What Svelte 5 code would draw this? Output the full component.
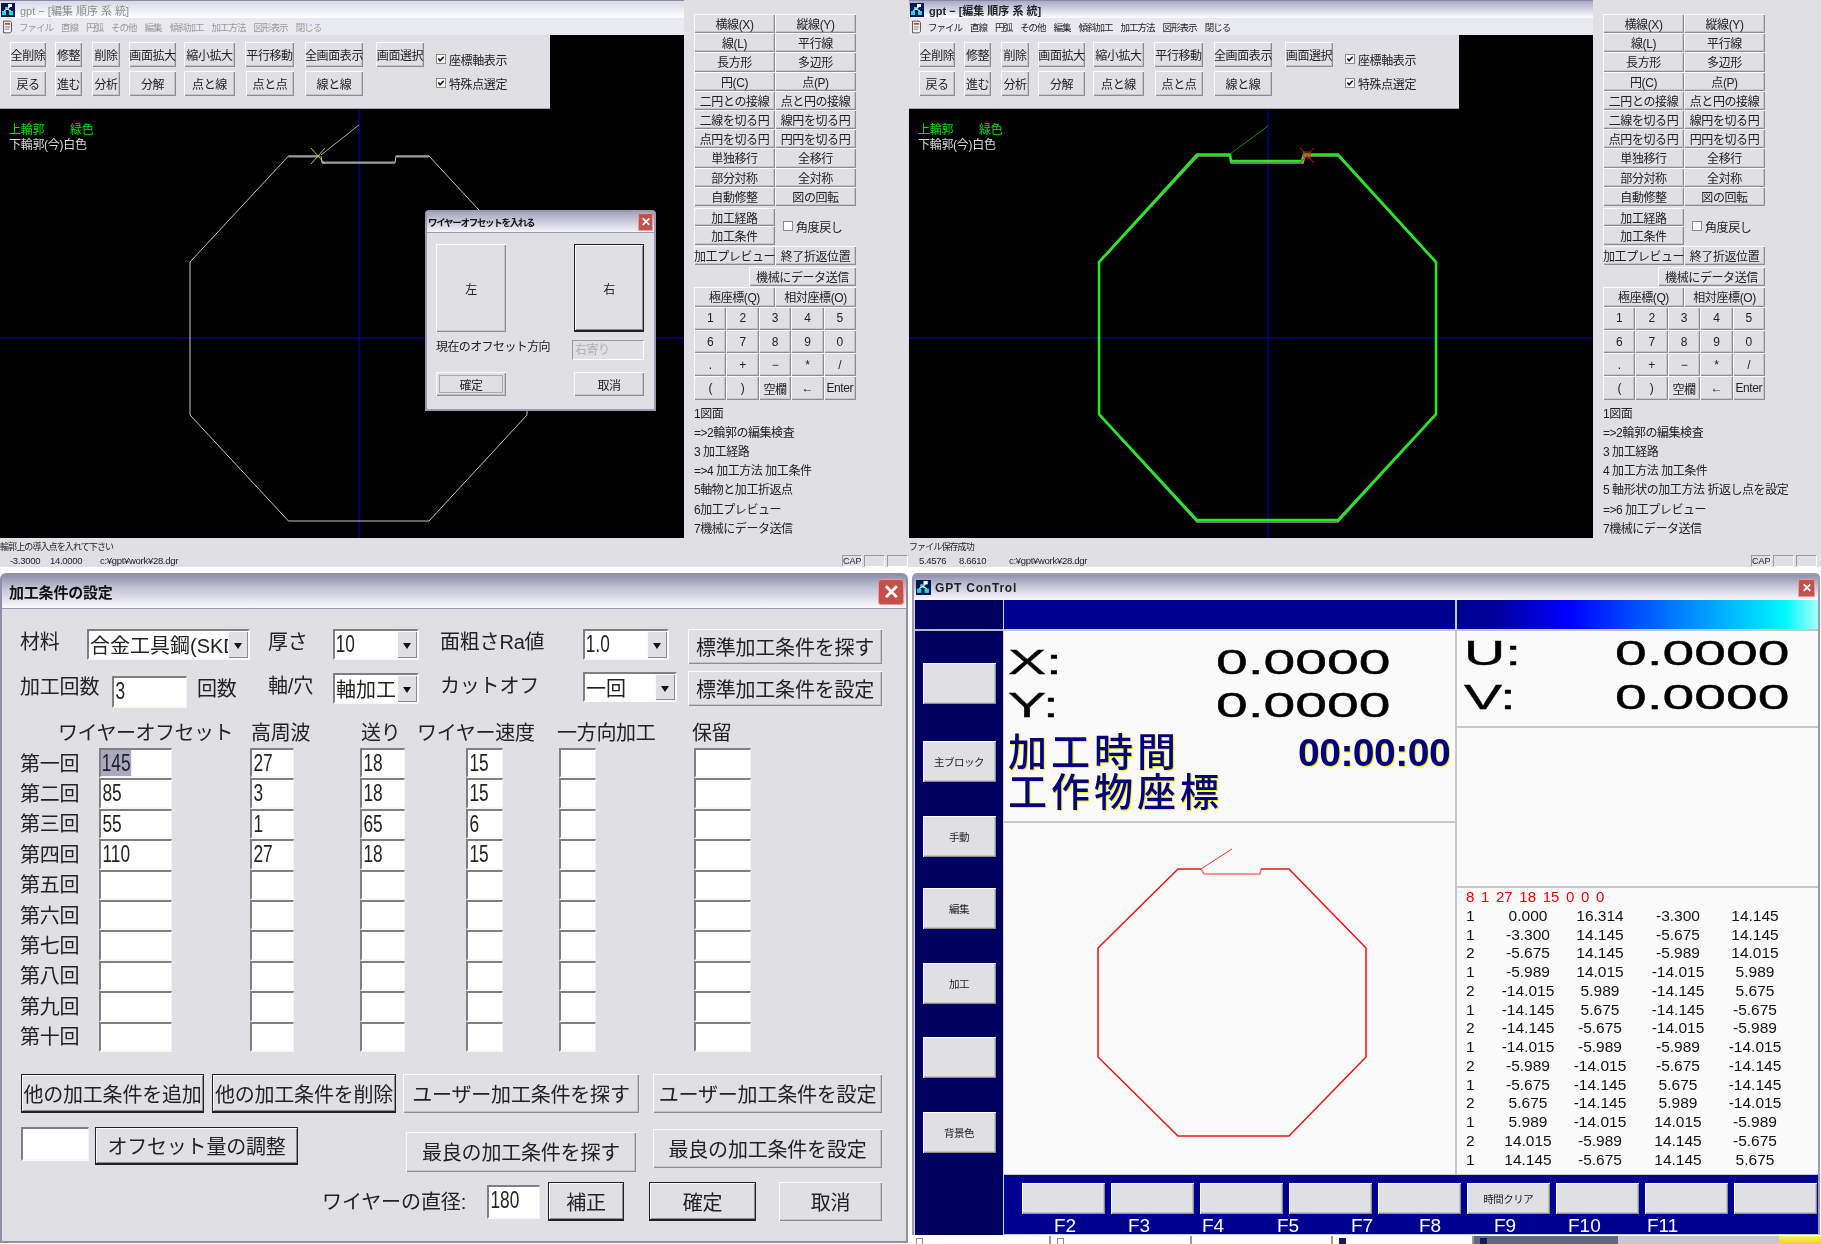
<script>
  const toolRows = [
    [['全削除',10,36],['修整',55,27],['削除',92,28],['画面拡大',129,47],['縮小拡大',184,51],['平行移動',245,49],['全画面表示',305,58],['画面選択',376,48]],
    [['戻る',10,36],['進む',55,27],['分析',92,28],['分解',129,47],['点と線',184,51],['点と点',246,48],['線と線',305,58]]
  ];
  const gapOf = (row, i) => row[i][1] - (i ? row[i-1][1] + row[i-1][2] : 0);
  const menu = ['ファイル','直線','円弧','その他','編集','傾斜加工','加工方法','図形表示','閉じる'];
  const drawBtns = ['横線(X)','縦線(Y)','線(L)','平行線','長方形','多辺形','円(C)','点(P)','二円との接線','点と円の接線','二線を切る円','線円を切る円','点円を切る円','円円を切る円','単独移行','全移行','部分対称','全対称','自動修整','図の回転'];
  const numpad = ['1','2','3','4','5','6','7','8','9','0','.','+','−','*','/','(',')','空欄','←','Enter'];
  const listA = ['1図面','=>2輪郭の編集検査','3 加工経路','=>4 加工方法 加工条件','5軸物と加工折返点','6加工プレビュー','7機械にデータ送信'];
  const listB = ['1図面','=>2輪郭の編集検査','3 加工経路','4 加工方法 加工条件','5 軸形状の加工方法 折返し点を設定','=>6 加工プレビュー','7機械にデータ送信'];

  const rounds = ['第一回','第二回','第三回','第四回','第五回','第六回','第七回','第八回','第九回','第十回'];
  const values = [['145','27','18','15','',''],['85','3','18','15','',''],['55','1','65','6','',''],['110','27','18','15','','']];
  const cellOf = (r, c) => (values[r] ? values[r][c] : '');

  const sideBtns = [['',32],['主ブロック',37],['手動',34],['編集',31],['加工',34],['',33],['背景色',34]];
  const fBtns = ['','','','','','時間クリア','','',''];
  const fLabels = ['F2','F3','F4','F5','F7','F8','F9','F10','F11'];
  const table = [
    ['1','0.000','16.314','-3.300','14.145'],['1','-3.300','14.145','-5.675','14.145'],['2','-5.675','14.145','-5.989','14.015'],
    ['1','-5.989','14.015','-14.015','5.989'],['2','-14.015','5.989','-14.145','5.675'],['1','-14.145','5.675','-14.145','-5.675'],
    ['2','-14.145','-5.675','-14.015','-5.989'],['1','-14.015','-5.989','-5.989','-14.015'],['2','-5.989','-14.015','-5.675','-14.145'],
    ['1','-5.675','-14.145','5.675','-14.145'],['2','5.675','-14.145','5.989','-14.015'],['1','5.989','-14.015','14.015','-5.989'],
    ['2','14.015','-5.989','14.145','-5.675'],['1','14.145','-5.675','14.145','5.675']
  ];
</script>

{#snippet appIcon()}
  <svg class="appicon" viewBox="0 0 14 14" aria-hidden="true">
    <rect width="14" height="14" fill="#0a1450"/>
    <rect x="7" y="1" width="4" height="3" fill="#fff"/>
    <rect x="4" y="4" width="4" height="3" fill="#22d8e0"/>
    <rect x="1" y="8" width="4" height="4" fill="#22d8e0"/>
    <rect x="8" y="8" width="4" height="4" fill="#22d8e0"/>
    <path d="M3 8 L6 6 L10 8 M9 4 L7 5" stroke="#fff" stroke-width="1" fill="none"/>
  </svg>
{/snippet}

{#snippet docIcon()}
  <svg class="docicon" viewBox="0 0 10 14" aria-hidden="true">
    <path d="M.5 .5 H8 L9.5 2 V12 L7.5 13.5 H.5 Z" fill="#f4f4f4" stroke="#444"/>
    <rect x="2" y="2.5" width="6" height="2" fill="#d84040"/>
    <path d="M2 7 H8 M2 9.5 H7" stroke="#777"/>
  </svg>
{/snippet}

{#snippet check(on, text)}
  <div class="chk">
    <span class="box">
      {#if on}
        <svg viewBox="0 0 9 9" aria-hidden="true"><path d="M1.5 4 L3.5 6.5 L7.5 2" fill="none" stroke="#111" stroke-width="1.7"/></svg>
      {/if}
    </span>
    <span>{text}</span>
  </div>
{/snippet}

{#snippet cad(active, list, status, c1, c2)}
  <div class="cad-grid">
    <div class="cad-main">
      <div class="title" class:inactive={!active}>
        {@render appIcon()}
        <span>gpt − [編集 順序 系 統]</span>
      </div>
      <div class="menu" class:inactive={!active}>
        {@render docIcon()}
        {#each menu as m}<span>{m}</span>{/each}
      </div>
      <div class="stage">
        <svg class="draw" viewBox="0 35 684 504" aria-hidden="true">
          <path d="M0 338 H684 M359 109 V539" stroke="#0000c8" stroke-width="1" fill="none"/>
          {#if active}
            <path d="M289 156 L190 263 V415 L288 522 H429 L527 415 V263 L429 156 H396 L394 163 H322 L321 156 Z" fill="none" stroke="#9a9a9a" stroke-width="1.5"/>
            <path d="M321 154.500 L322 161 H393 L395 154.500 H429 L527 262 V414 L429 520 H288 L190 414 V262 L288 154.500 Z" fill="none" stroke="#1cf01c" stroke-width="2.500"/>
            <path d="M359 126 L321 154" stroke="#0a8a0a" stroke-width="1" fill="none"/>
            <path d="M391 148 L405 163 M405 148 L391 163" stroke="#e01010" stroke-width="1" fill="none"/>
            <rect x="395" y="152" width="6" height="6" fill="none" stroke="#e01010"/>
          {:else}
            <path d="M320 156 H288.500 L190 262 V415 L288.500 521 H429 L527 415 V262 L429 156 H396 L395 163 H322 L321 156" fill="none" stroke="#c6c6c6" stroke-width="1"/>
            <path d="M288.500 156.500 H318 M322 162.500 H395 M396 156.500 H429" stroke="#9a9a9a" stroke-width="2" fill="none"/>
            <path d="M359 125 L321 155" stroke="#a8a8a8" stroke-width="1" fill="none"/>
            <path d="M311 148 L325 164 M325 148 L311 164" stroke="#c8c820" stroke-width="1" fill="none"/>
          {/if}
        </svg>

        <div class="toolbar">
          <div class="tool-rows">
            {#each toolRows as row}
              <div class="tool-row">
                {#each row as b, i}
                  <button class="btn" style="width:{b[2]}px;margin-left:{gapOf(row, i)}px">{b[0]}</button>
                {/each}
              </div>
            {/each}
          </div>
          <div class="tool-checks">
            {@render check(true, '座標軸表示')}
            {@render check(true, '特殊点選定')}
          </div>
        </div>

        <div class="legend">
          <div class="green">上輪郭<span class="legend-gap">緑色</span></div>
          <div>下輪郭(今)白色</div>
        </div>

        {#if !active}
          <div class="dialog">
            <div class="dlg-title">
              <span>ワイヤーオフセットを入れる</span>
              <span class="close small">✕</span>
            </div>
            <div class="dlg-body">
              <div class="dlg-big">
                <button class="btn">左</button>
                <button class="btn def">右</button>
              </div>
              <div class="dlg-line">
                <span class="dlg-label">現在のオフセット方向</span>
                <span class="dlg-field">右寄り</span>
              </div>
              <div class="dlg-foot">
                <button class="btn focus">確定</button>
                <button class="btn">取消</button>
              </div>
            </div>
          </div>
        {/if}
      </div>
    </div>

    <aside class="panel">
      <div class="two">
        {#each drawBtns as b}<button class="btn">{b}</button>{/each}
      </div>
      <div class="two mid">
        <div class="stack">
          <button class="btn">加工経路</button>
          <button class="btn">加工条件</button>
        </div>
        {@render check(false, '角度戻し')}
      </div>
      <div class="two wide">
        <button class="btn">加工プレビュー</button>
        <button class="btn">終了折返位置</button>
      </div>
      <button class="btn send">機械にデータ送信</button>
      <div class="two coord">
        <button class="btn">極座標(Q)</button>
        <button class="btn">相対座標(O)</button>
      </div>
      <div class="pad">
        {#each numpad as n}<button class="btn">{n}</button>{/each}
      </div>
      <div class="steps">
        {#each list as l}<div>{l}</div>{/each}
      </div>
    </aside>

    <footer class="status">
      <div class="status-msg">{status}</div>
      <div class="status-line">
        <span class="s-a">{c1}</span>
        <span class="s-b">{c2}</span>
        <span class="s-path">c:¥gpt¥work¥28.dgr</span>
        <span class="s-box cap">CAP</span>
        <span class="s-box"></span>
        <span class="s-box"></span>
      </div>
    </footer>
  </div>
{/snippet}

<div class="desk">
  <section class="cad cad-a">{@render cad(false, listA, '輪郭上の導入点を入れて下さい', '-3.3000', '14.0000')}</section>
  <section class="cad cad-b">{@render cad(true, listB, 'ファイル保存成功', '5.4576', '8.6610')}</section>

  <section class="form-win">
    <div class="form-title">
      <span>加工条件の設定</span>
      <span class="close">✕</span>
    </div>
    <div class="form">
      <div class="r1">
        <span class="lab">材料</span>
        <div class="combo cb-mat"><span class="combo-txt">合金工具鋼(SKD</span><span class="arrow"></span></div>
        <span class="lab">厚さ</span>
        <div class="combo cb-s"><span class="combo-txt num">10</span><span class="arrow"></span></div>
        <span class="lab">面粗さRa値</span>
        <div class="combo cb-s"><span class="combo-txt num">1.0</span><span class="arrow"></span></div>
        <button class="btn big b-std">標準加工条件を探す</button>
      </div>
      <div class="r2">
        <span class="lab m3">加工回数</span>
        <div class="field f-count"><span class="val">3</span></div>
        <span class="lab m5">回数</span>
        <span class="lab m2">軸/穴</span>
        <div class="combo cb-s m2"><span class="combo-txt">軸加工</span><span class="arrow"></span></div>
        <span class="lab m2">カットオフ</span>
        <div class="combo cb-cut"><span class="combo-txt">一回</span><span class="arrow"></span></div>
        <button class="btn big b-std">標準加工条件を設定</button>
      </div>
      <div class="heads">
        <span>ワイヤーオフセット</span><span>高周波</span><span>送り</span><span>ワイヤー速度</span><span>一方向加工</span><span>保留</span>
      </div>
      <div class="cells">
        {#each rounds as r, ri}
          <span class="round">{r}</span>
          {#each [0,1,2,3,4,5] as c}
            <div class="field c{c}">
              <span class="val" class:sel={ri === 0 && c === 0}>{cellOf(ri, c)}</span>
            </div>
          {/each}
        {/each}
      </div>
      <div class="act-a">
        <button class="btn big def a1">他の加工条件を追加</button>
        <button class="btn big def a2">他の加工条件を削除</button>
        <button class="btn big a3">ユーザー加工条件を探す</button>
        <button class="btn big a4">ユーザー加工条件を設定</button>
      </div>
      <div class="act-b">
        <div class="field b1"></div>
        <button class="btn big def b2">オフセット量の調整</button>
        <button class="btn big b3">最良の加工条件を探す</button>
        <button class="btn big b4">最良の加工条件を設定</button>
      </div>
      <div class="act-c">
        <span class="lab wire">ワイヤーの直径:</span>
        <div class="field d1"><span class="val">180</span></div>
        <button class="btn big def d2">補正</button>
        <button class="btn big def d3">確定</button>
        <button class="btn big d4">取消</button>
      </div>
    </div>
  </section>

  <section class="gpt">
    <div class="gpt-title">
      {@render appIcon()}
      <span>GPT ConTrol</span>
      <span class="close tiny">✕</span>
    </div>
    <div class="gpt-body">
      <div class="side">
        <div class="side-top"></div>
        {#each sideBtns as s}
          <button class="btn side-btn" style="margin-top:{s[1]}px">{s[0]}</button>
        {/each}
      </div>
      <div class="gpt-main">
        <div class="bar"></div>
        <div class="bar grad"></div>
        <div class="col">
          <div class="pos">
            <div class="pos-row"><span class="big-t">X:</span><span class="big-t">0.0000</span></div>
            <div class="pos-row"><span class="big-t">Y:</span><span class="big-t">0.0000</span></div>
            <div class="time-row"><span class="jp">加工時間</span><span class="clock">00:00:00</span></div>
            <div class="time-row"><span class="jp">工作物座標</span></div>
          </div>
          <div class="shape">
            <svg viewBox="1004 823 451 351" aria-hidden="true">
              <path d="M1232 849 L1201 869" stroke="#ff3030" stroke-width="1" fill="none"/>
              <path d="M1201 869 L1204 874 H1260 L1261 869" stroke="#ff7070" stroke-width="1.500" fill="none"/>
              <path d="M1201 869 H1178 L1098 948 V1057 L1178 1136 H1289 L1366 1057 V948 L1289 869 H1261" stroke="#f41010" stroke-width="1.500" fill="none"/>
            </svg>
          </div>
        </div>
        <div class="col">
          <div class="uv">
            <div class="uv-row"><span class="big-t">U:</span><span class="big-t">0.0000</span></div>
            <div class="uv-row"><span class="big-t">V:</span><span class="big-t">0.0000</span></div>
          </div>
          <div class="blank"></div>
          <div class="tbl">
            <div class="tbl-head">8 1 27 18 15 0 0 0</div>
            {#each table as row}
              <div class="tbl-row">{#each row as v}<span>{v}</span>{/each}</div>
            {/each}
          </div>
        </div>
        <div class="fbar">
          <div class="fbtns">
            {#each fBtns as f}<button class="btn">{f}</button>{/each}
          </div>
          <div class="flabels">
            {#each fLabels as f}<span>{f}</span>{/each}
          </div>
        </div>
      </div>
    </div>
  </section>

  <div class="taskbar">
    <span class="tab"><i class="mini hollow"></i></span>
    <span class="tab"><i class="mini hollow"></i></span>
    <span class="tab"></span>
    <span class="tab"><i class="mini navy"></i></span>
    <span class="tab on"><i class="mini navy"></i></span>
    <span class="tray"></span>
    <span class="start"></span>
  </div>
</div>

<style>
  :global(body) { margin: 0; background: #fff; }
  .desk {
    position: relative; width: 1821px; height: 1244px; overflow: hidden; background: #fff;
    font-family: "Liberation Sans", "Noto Sans CJK JP", sans-serif; color: #222;
    filter: blur(.35px);
  }
  button { font-family: inherit; color: inherit; }

  .btn {
    box-sizing: border-box; padding: 0; margin: 0; background: #e0dfe3; border: 0; border-radius: 0;
    box-shadow: inset 1px 1px 0 #fbfbfb, inset -1px -1px 0 #8d8c90, inset -2px -2px 0 #c4c3c7;
    font-size: 12px; letter-spacing: -.4px; white-space: nowrap; overflow: hidden;
  }
  .btn.def { box-shadow: inset 0 0 0 1px #222, inset -1px -2px 0 #222, inset 2px 2px 0 #fbfbfb, inset -2px -3px 0 #8d8c90; }
  .btn.focus { box-shadow: inset 1px 1px 0 #fbfbfb, inset -1px -1px 0 #8d8c90, inset -2px -2px 0 #c4c3c7, inset 0 0 0 3px #e0dfe3, inset 0 0 0 4px #aaa; }

  /* ---------- CAD windows ---------- */
  .cad { position: absolute; top: 0; width: 909px; height: 567px; background: #e0dfe3; }
  .cad-a { left: 0; }
  .cad-b { left: 909px; width: 912px; }
  .cad-grid { display: grid; grid-template-columns: 684px 225px; grid-template-rows: 538px 29px; height: 100%; }
  .cad-main { display: flex; flex-direction: column; min-width: 0; }
  .title {
    height: 18px; display: flex; align-items: center; gap: 5px; padding-left: 1px; box-sizing: border-box;
    background: linear-gradient(#a9a9c6, #dcdcea 60%, #fff); font-size: 11px; font-weight: 700; color: #222;
    border-top: 1px solid #8a8aa8;
  }
  .title.inactive { color: #8c8c8c; font-weight: 400; background: linear-gradient(#d8d8e6, #f0f0f6 60%, #fff); }
  .appicon { width: 14px; height: 14px; flex: none; }
  .docicon { width: 9px; height: 14px; flex: none; }
  .menu {
    height: 17px; display: flex; align-items: center; gap: 8px; padding-left: 3px; background: #e9e9f0;
    font-size: 9.500px; letter-spacing: -1px; color: #222;
  }
  .menu .docicon { margin-right: -1px; }
  .menu.inactive { color: #9a9a9a; }
  .stage { position: relative; height: 503px; background: #000; overflow: hidden; }
  .draw { position: absolute; inset: 0; width: 684px; height: 504px; }
  .toolbar {
    position: relative; width: 550px; height: 74px; box-sizing: border-box; background: #e0dfe3;
    border-bottom: 1px solid #a5a5a8; display: flex;
  }
  .tool-rows { width: 436px; padding-top: 7px; display: flex; flex-direction: column; gap: 4px; }
  .tool-row { display: flex; height: 25px; }
  .tool-checks { display: flex; flex-direction: column; gap: 10px; padding-top: 17px; }
  .chk { display: flex; align-items: center; gap: 3px; font-size: 12px; letter-spacing: -.4px; height: 14px; }
  .box { width: 10px; height: 10px; flex: none; background: #fff; box-sizing: border-box; border: 1px solid #8a8a8a; display: block; }
  .box svg { display: block; width: 8px; height: 8px; }
  .legend { position: relative; padding: 14px 0 0 9px; font-size: 12px; letter-spacing: -.3px; line-height: 15px; color: #d8d8d8; }
  .green { color: #00e000; }
  .legend-gap { margin-left: 26px; }

  .dialog {
    position: absolute; left: 425px; top: 175px; width: 231px; height: 201px; box-sizing: border-box;
    background: #e0dfe3; border: 2px solid #9a9bb2; border-radius: 4px 4px 0 0;
  }
  .dlg-title {
    height: 20px; display: flex; align-items: center; justify-content: space-between; padding: 0 1px 0 1px;
    background: linear-gradient(#a4a5c0, #f4f4f8); font-size: 9.500px; font-weight: 700; letter-spacing: -1.300px;
    border-bottom: 1px solid #9a9bb2; color: #111;
  }
  .dlg-body { padding: 11px 10px 0 9px; font-size: 13px; letter-spacing: -.5px; }
  .dlg-big { display: flex; justify-content: space-between; }
  .dlg-big .btn { width: 70px; height: 88px; font-size: 12px; }
  .dlg-line { display: flex; justify-content: space-between; align-items: flex-start; height: 20px; margin-top: 8px; font-size: 12px; }
  .dlg-label { line-height: 14px; letter-spacing: -.6px; }
  .dlg-field {
    width: 72px; height: 20px; box-sizing: border-box; border: 1px solid; border-color: #9a9a9e #fff #fff #9a9a9e;
    color: #b0b0b0; padding-left: 2px; line-height: 18px; font-size: 12px;
  }
  .dlg-foot { display: flex; justify-content: space-between; margin-top: 12px; }
  .dlg-foot .btn { width: 70px; height: 24px; }

  .close {
    width: 26px; height: 26px; box-sizing: border-box; flex: none; border-radius: 4px; background: #c4504c;
    box-shadow: inset 0 0 0 1px #e89a96; color: #fff; font-size: 20px; font-weight: 700; letter-spacing: 0;
    display: flex; align-items: center; justify-content: center; line-height: 1;
  }
  .close.small { width: 15px; height: 18px; font-size: 12px; border-radius: 2px; }
  .close.tiny { width: 17px; height: 18px; font-size: 12px; margin-left: auto; margin-right: 3px; border-radius: 2px; }

  .panel { padding: 14px 0 0 10px; font-size: 12px; min-width: 0; }
  .two { display: grid; grid-template-columns: 81px 81px; grid-auto-rows: 19.200px; }
  .two.mid { margin-top: 2px; grid-auto-rows: 37px; }
  .two.mid .chk { padding-left: 8px; align-self: center; }
  .stack { display: grid; grid-auto-rows: 18.500px; }
  .two.wide { margin-top: 1.500px; grid-auto-rows: 19px; }
  .send { display: block; width: 107px; height: 19px; margin: 1.500px 0 1px 55px; }
  .two.coord { grid-auto-rows: 20px; }
  .pad { display: grid; grid-template-columns: repeat(5, 32.400px); grid-auto-rows: 23.200px; }
  .steps { margin-top: 5px; line-height: 19.200px; font-size: 12px; letter-spacing: -.45px; white-space: nowrap; }

  .status { grid-column: 1 / -1; font-size: 9px; color: #222; overflow: hidden; }
  .status-msg { height: 17px; line-height: 19px; letter-spacing: -.9px; }
  .status-line { display: flex; height: 12px; line-height: 12px; letter-spacing: -.3px; font-size: 9.500px; padding-right: 1px; }
  .s-a { margin-left: 10px; width: 40px; flex: none; }
  .s-b { width: 50px; flex: none; }
  .s-path { flex: none; white-space: nowrap; }
  .s-box { width: 21px; height: 12px; flex: none; box-sizing: border-box; border: 1px solid; border-color: #9a9a9e #fff #fff #9a9a9e; margin-left: 2px; line-height: 10px; }
  .s-box.cap { margin-left: auto; width: 20px; font-size: 9px; letter-spacing: 0; text-align: center; }

  /* ---------- Machining conditions ---------- */
  .form-win {
    position: absolute; left: 0; top: 573px; width: 908px; height: 670px; box-sizing: border-box;
    background: #e0dfe3; border: 2px solid #8f90a8; border-radius: 6px 6px 0 0;
    display: flex; flex-direction: column;
  }
  .form-title {
    height: 33px; flex: none; display: flex; align-items: center; justify-content: space-between; padding: 0 2px 0 7px;
    background: linear-gradient(#8f90ad, #c3c4d6 40%, #fbfbfd); border-bottom: 1px solid #9a9bb2;
    font-size: 15px; font-weight: 700; letter-spacing: -.2px; color: #111;
  }
  .form { padding: 20px 0 0 18px; font-size: 20px; }
  .lab { line-height: 26px; white-space: nowrap; letter-spacing: -.2px; }
  .m2 { margin-top: 2px; }
  .m3 { margin-top: 3px; }
  .m5 { margin-top: 5px; }
  .r1, .r2 { display: grid; align-items: start; }
  .r1 { grid-template-columns: 67px 181px 65px 107px 143px 105px 194px; height: 42px; }
  .r2 { grid-template-columns: 92px 85px 71px 65px 107px 143px 105px 194px; height: 49px; }
  .combo {
    box-sizing: border-box; height: 31px; display: flex; align-items: center; overflow: hidden; background: #fff;
    border: 2px solid; border-color: #808084 #fafafa #fafafa #808084;
  }
  .combo-txt { flex: 1; min-width: 0; overflow: hidden; white-space: nowrap; font-size: 20px; letter-spacing: 0; padding-left: 1px; }
  .combo-txt.num { font-size: 23px; display: block; transform: scaleX(.75); transform-origin: left; }
  .arrow {
    width: 20px; align-self: stretch; flex: none; position: relative; background: #e0dfe3;
    box-shadow: inset 1px 1px 0 #fbfbfb, inset -1px -1px 0 #8d8c90;
  }
  .arrow::after {
    content: ""; position: absolute; left: 6px; top: 12px; border: 4.500px solid transparent; border-top: 6px solid #111; border-bottom: 0;
  }
  .cb-mat { width: 163px; }
  .cb-s { width: 86px; }
  .cb-cut { width: 94px; height: 30px; margin-top: 1px; }
  .big { font-size: 20px; letter-spacing: -.2px; }
  .b-std { width: 194px; height: 35px; }
  .field {
    box-sizing: border-box; background: #fff; overflow: hidden;
    border-style: solid; border-width: 2px 1px 2px 2px; border-color: #808084 #f4f4f0 #f8f8f4 #808084;
    height: 30.400px;
  }
  .val {
    display: inline-block; font-size: 24px; line-height: 26px; transform: scaleX(.72); transform-origin: left; padding-left: 2px;
    color: #222;
  }
  .val.sel { background: #a9a9c0; padding: 0 1px; }
  .f-count { width: 75px; height: 32px; margin-top: 5px; }
  .heads {
    display: grid; grid-template-columns: 193px 110px 56px 140px 135px auto; padding-left: 38px; height: 27px; line-height: 26px;
    letter-spacing: -.3px; white-space: nowrap;
  }
  .heads span:first-child { letter-spacing: -.5px; }
  .cells {
    margin-top: 1px; display: grid; grid-template-columns: 79px 151px 110px 106px 93px 135px 57px; grid-auto-rows: 30.400px;
    align-items: center;
  }
  .round { letter-spacing: -.2px; margin-top: -2px; }
  .c0 { width: 73px; }
  .c1 { width: 44px; }
  .c2 { width: 45px; }
  .c3 { width: 37px; }
  .c4 { width: 37px; }
  .c5 { width: 57px; }
  .act-a, .act-b, .act-c { display: flex; align-items: flex-start; }
  .act-a { margin-top: 22px; padding-left: 1px; height: 53px; }
  .act-a .btn { height: 39px; }
  .a1 { width: 183px; }
  .a2 { width: 184px; margin-left: 8px; }
  .a3 { width: 236px; margin-left: 7px; }
  .a4 { width: 229px; margin-left: 14px; }
  .act-b { padding-left: 1px; height: 55px; }
  .b1 { width: 68px; height: 34px; }
  .b2 { width: 203px; height: 38px; margin-left: 6px; }
  .b3 { width: 230px; height: 40px; margin-left: 108px; margin-top: 5px; }
  .b4 { width: 229px; height: 39px; margin-left: 17px; margin-top: 2px; }
  .act-c { height: 40px; }
  .wire { margin-left: 302px; width: 165px; margin-top: 7px; letter-spacing: -.1px; }
  .d1 { width: 53px; height: 34px; margin-top: 3px; }
  .d1 .val { line-height: 26px; }
  .d2, .d3, .d4 { height: 39px; }
  .d2 { width: 76px; margin-left: 8px; }
  .d3 { width: 107px; margin-left: 25px; }
  .d4 { width: 103px; margin-left: 23px; }

  /* ---------- GPT control ---------- */
  .gpt {
    position: absolute; left: 912px; top: 573px; width: 908px; height: 662px; box-sizing: border-box;
    background: #d4d4d8; border: 2px solid #9a9bb2; border-bottom: 0; border-radius: 5px 5px 0 0;
    display: flex; flex-direction: column;
  }
  .gpt-title {
    height: 25px; flex: none; display: flex; align-items: center; gap: 4px; padding-left: 2px;
    background: linear-gradient(#9091ae, #c5c6d8 45%, #fbfbfd); font-size: 12px; font-weight: 700; letter-spacing: .8px; color: #222;
  }
  .gpt-title .appicon { width: 15px; height: 15px; }
  .gpt-body { display: flex; flex: 1; min-height: 0; padding-left: 1px; }
  .side { width: 88px; margin-right: 1px; background: #000060; display: flex; flex-direction: column; align-items: center; }
  .side-top { width: 100%; height: 29px; flex: none; border-bottom: 2px solid #b8b8c4; box-sizing: content-box; }
  .side-btn { width: 73px; height: 41px; flex: none; font-size: 10.500px; letter-spacing: -.5px; }
  .gpt-main {
    flex: 1; min-width: 0; display: grid; grid-template-columns: 451px 361px; grid-template-rows: 29px 543px 58px; gap: 2px 2px;
    background: #c8c8cc;
  }
  .bar { background: #000090; }
  .bar.grad { background: linear-gradient(90deg, #000090 0, #000098 10%, #0000ff 31%, #0078ff 60%, #00f8ff 91%, #a8fff8 100%); }
  .col { display: flex; flex-direction: column; gap: 2px; min-height: 0; }
  .pos { height: 190px; flex: none; box-sizing: border-box; background: #fafafa; padding: 9px 0 0 4px; }
  .pos-row { display: grid; grid-template-columns: 208px auto; height: 43px; line-height: 43px; }
  .big-t {
    display: inline-block; font-size: 35px; color: #000; transform: scaleX(1.63); transform-origin: left;
    font-family: "Liberation Sans", sans-serif; -webkit-text-stroke: .4px #000;
  }
  .time-row { display: grid; grid-template-columns: 290px auto; height: 40px; line-height: 40px; white-space: nowrap; color: #000080; text-shadow: 1px 1px 0 #f4f000; }
  .pos-row + .time-row { margin-top: 7px; }
  .jp { font-size: 39px; line-height: 40px; letter-spacing: 4px; font-weight: 500; }
  .clock { font-size: 39px; font-weight: 700; letter-spacing: -.5px; }
  .shape { flex: 1; background: #fafafa; min-height: 0; }
  .shape svg { display: block; width: 451px; height: 351px; }
  .uv { height: 95px; flex: none; background: #fafafa; box-sizing: border-box; padding: 0 0 0 7px; }
  .uv-row { display: grid; grid-template-columns: 151px auto; height: 44px; line-height: 44px; }
  .blank { height: 158px; flex: none; background: #fafafa; }
  .tbl { flex: 1; background: #fafafa; padding-left: 9px; min-height: 0; font-size: 15.500px; color: #111; }
  .tbl-head { color: #f00000; height: 18.750px; line-height: 18.750px; word-spacing: 2.500px; font-size: 15px; }
  .tbl-row { display: grid; grid-template-columns: 25px 74px 70px 86px 68px; height: 18.750px; line-height: 18.750px; text-align: center; }
  .tbl-row span:first-child { text-align: left; }
  .fbar { grid-column: 1 / -1; background: #000090; overflow: hidden; padding: 8px 0 0 18px; margin-top: -1px; }
  .fbtns { display: flex; gap: 6.500px; }
  .fbtns .btn { width: 82.500px; height: 31px; flex: none; font-size: 10.500px; letter-spacing: -.5px; }
  .flabels { display: grid; grid-template-columns: 74px 74px 75px 74px 68px 75px 74px 79px auto; margin: 5px 0 0 32px; color: #fff; font-size: 19px; line-height: 14px; }

  .taskbar { position: absolute; left: 910px; top: 1236px; right: 0; height: 8px; display: flex; background: #fff; }
  .tab { width: 141px; box-sizing: border-box; border-right: 2px solid #9a9a9a; padding: 2px 0 0 6px; flex: none; }
  .tab.on { width: 144px; background: #5a6a78; border: 0; }
  .tray { width: 161px; background: #c8c8cc; flex: none; }
  .start { flex: 1; background: linear-gradient(#f8f060, #f0d030); }
  .mini { display: block; width: 7px; height: 7px; box-sizing: border-box; }
  .mini.hollow { border: 1px solid #888; }
  .mini.navy { background: #101860; }
</style>
